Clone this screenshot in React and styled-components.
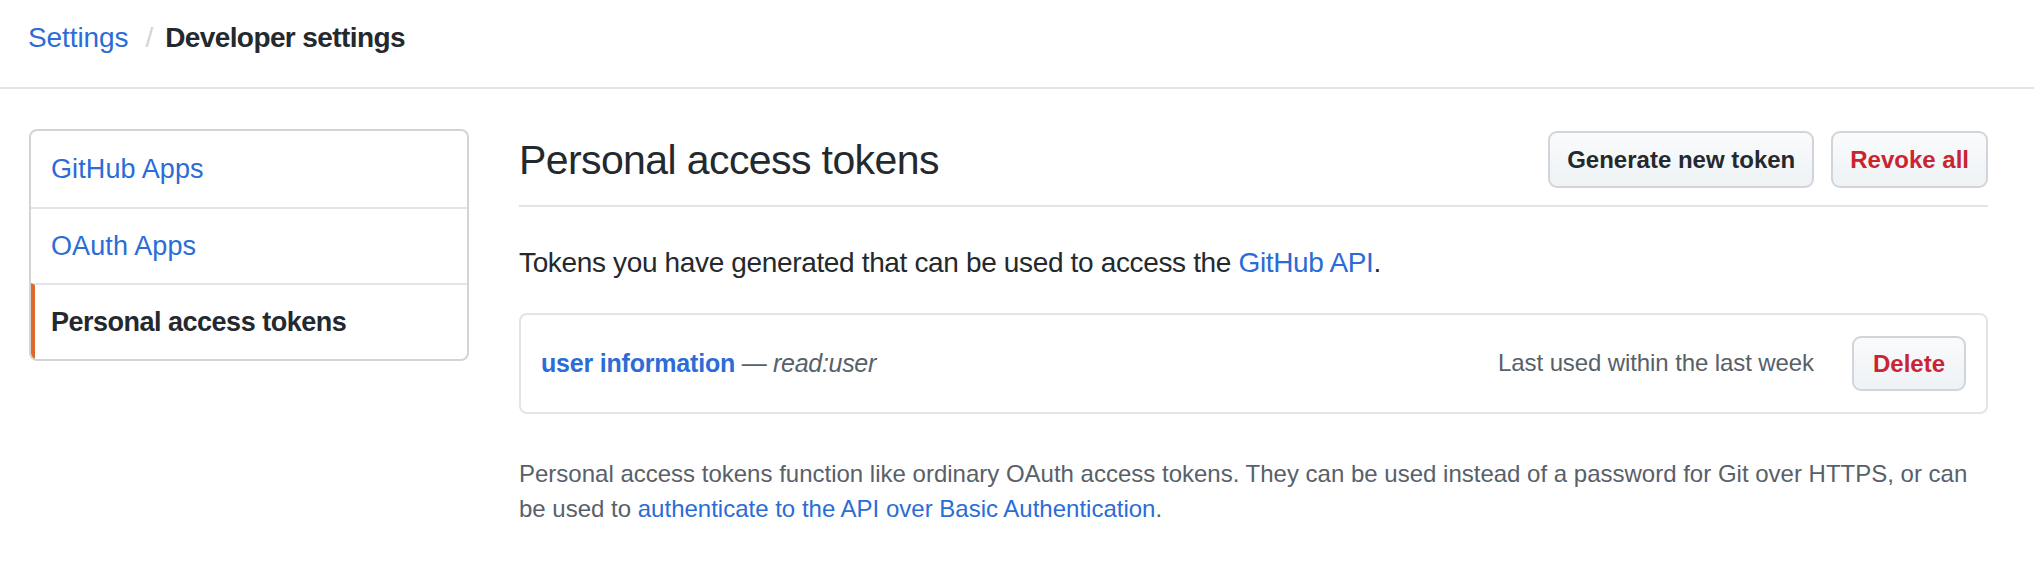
import styled, { createGlobalStyle } from "styled-components";

const GlobalStyle = createGlobalStyle`
  body {
    margin: 0;
    background: #ffffff;
    font-family: "Liberation Sans", Arial, Helvetica, sans-serif;
    color: #24292e;
  }
`;

const menu = [
  { label: "GitHub Apps" },
  { label: "OAuth Apps" },
  { label: "Personal access tokens", selected: true },
];

const App = () => {
  return (
    <>
      <GlobalStyle />
      <Header>
        <Crumb href="#">Settings</Crumb>
        <Slash>/</Slash>
        <Current>Developer settings</Current>
      </Header>
      <Layout>
        <Sidebar>
          {menu.map((item) => (
            <MenuItem key={item.label} $selected={item.selected}>
              {item.label}
            </MenuItem>
          ))}
        </Sidebar>
        <Main>
          <Subhead>
            <Title>Personal access tokens</Title>
            <Actions>
              <Button>Generate new token</Button>
              <Button $danger>Revoke all</Button>
            </Actions>
          </Subhead>
          <Intro>
            Tokens you have generated that can be used to access the{" "}
            <Link href="#">GitHub API</Link>.
          </Intro>
          <TokenBox>
            <TokenName>
              <TokenLink href="#">user information</TokenLink>
              <Scope>
                {" "}— <em>read:user</em>
              </Scope>
            </TokenName>
            <TokenMeta>
              <LastUsed>Last used within the last week</LastUsed>
              <Button $danger $small>
                Delete
              </Button>
            </TokenMeta>
          </TokenBox>
          <Note>
            Personal access tokens function like ordinary OAuth access tokens. They can be used
            instead of a password for Git over HTTPS, or can be used to{" "}
            <Link href="#">authenticate to the API over Basic Authentication</Link>.
          </Note>
        </Main>
      </Layout>
    </>
  );
};

export default App;

const Header = styled.header`
  display: flex;
  align-items: center;
  box-sizing: border-box;
  height: 89px;
  padding: 0 28px 12px;
  border-bottom: 2px solid #e1e4e8;
  font-size: 28px;
`;

const Crumb = styled.a`
  color: #2b6cd6;
  text-decoration: none;
  letter-spacing: -0.1px;
`;

const Slash = styled.span`
  color: #d1d5da;
  margin: 0 12px 0 17px;
`;

const Current = styled.span`
  font-weight: 700;
  color: #24292e;
  letter-spacing: -0.6px;
`;

const Layout = styled.div`
  display: flex;
  align-items: flex-start;
  gap: 50px;
  padding: 40px 46px 0 29px;
`;

const Sidebar = styled.nav`
  width: 440px;
  flex-shrink: 0;
  box-sizing: border-box;
  border: 2px solid #d1d5da;
  border-radius: 8px;
  overflow: hidden;
`;

const MenuItem = styled.a`
  display: flex;
  align-items: center;
  height: 76px;
  box-sizing: border-box;
  padding-left: ${(p) => (p.$selected ? "16px" : "20px")};
  font-size: 27px;
  color: ${(p) => (p.$selected ? "#24292e" : "#2b6cd6")};
  font-weight: ${(p) => (p.$selected ? 700 : 400)};
  letter-spacing: ${(p) => (p.$selected ? "-0.5px" : "0.1px")};
  border-left: ${(p) => (p.$selected ? "4px solid #dc6a2c" : "none")};
  & + & {
    border-top: 2px solid #e1e4e8;
  }
`;

const Main = styled.main`
  flex: 1;
  min-width: 0;
`;

const Subhead = styled.div`
  display: flex;
  align-items: center;
  justify-content: space-between;
  padding: 2px 0 17px;
  border-bottom: 2px solid #e1e4e8;
`;

const Title = styled.h2`
  margin: 0;
  font-size: 41px;
  font-weight: 400;
  letter-spacing: -0.6px;
  color: #24292e;
  line-height: 56px;
`;

const Actions = styled.div`
  display: flex;
  gap: 17px;
`;

const Button = styled.button`
  height: ${(p) => (p.$small ? "55px" : "57px")};
  padding: 0 ${(p) => (p.$small ? "19px" : "17px")};
  font-family: inherit;
  font-size: 24px;
  font-weight: 700;
  color: ${(p) => (p.$danger ? "#cb2431" : "#24292e")};
  background: linear-gradient(180deg, #fafbfc, #eff3f6 90%);
  border: 2px solid #d1d5da;
  border-radius: 9px;
  white-space: nowrap;
  cursor: pointer;
`;

const Intro = styled.p`
  margin: 35px 0 29px;
  font-size: 28px;
  letter-spacing: -0.35px;
  line-height: 42px;
  color: #24292e;
`;

const Link = styled.a`
  color: #2b6cd6;
  text-decoration: none;
`;

const TokenBox = styled.div`
  display: flex;
  align-items: center;
  justify-content: space-between;
  height: 101px;
  box-sizing: border-box;
  padding: 0 20px;
  border: 2px solid #e1e4e8;
  border-radius: 8px;
`;

const TokenName = styled.div`
  font-size: 25px;
`;

const TokenLink = styled.a`
  color: #2b6cd6;
  font-weight: 700;
  text-decoration: none;
  letter-spacing: -0.2px;
`;

const Scope = styled.span`
  color: #586069;
  letter-spacing: -0.3px;
`;

const TokenMeta = styled.div`
  display: flex;
  align-items: center;
  gap: 38px;
`;

const LastUsed = styled.span`
  font-size: 24px;
  color: #586069;
  letter-spacing: -0.1px;
  margin-top: -2px;
`;

const Note = styled.p`
  margin: 42px 0 0;
  font-size: 24px;
  line-height: 35px;
  color: #586069;
`;
